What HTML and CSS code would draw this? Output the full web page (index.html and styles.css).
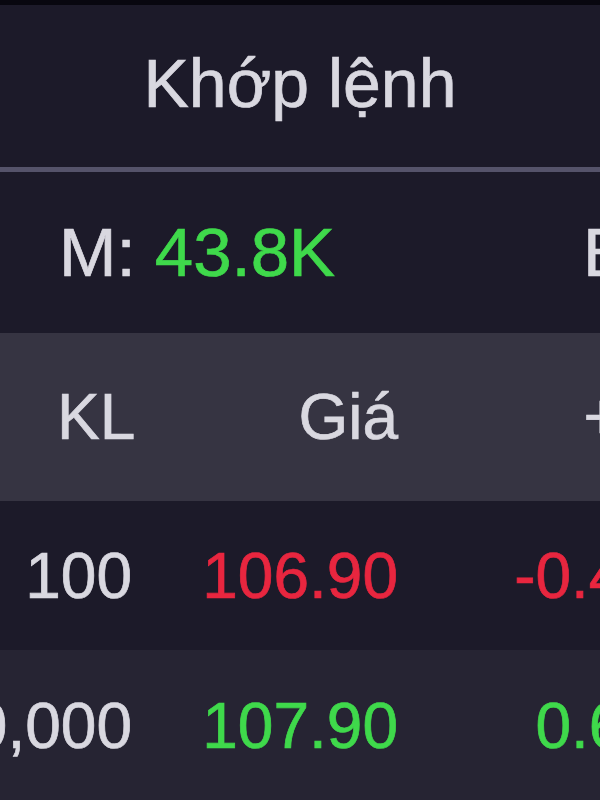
FILE: index.html
```html
<!DOCTYPE html>
<html lang="vi">
<head>
  <meta charset="UTF-8" />
  <meta name="viewport" content="width=device-width, initial-scale=1.0" />
  <title>Khớp lệnh</title>
  <link rel="stylesheet" href="styles.css">
</head>
<body>

<div class="screen">
  <div class="status-strip"></div>

  <!-- Title -->
  <div class="title-bar">Khớp lệnh</div>

  <!-- Summary -->
  <div class="summary">
    <span class="sum-item">M: <span class="up">43.8K</span></span>
    <span class="sum-item">B: <span class="down">21.4K</span></span>
  </div>

  <!-- Table -->
  <div class="table">
    <div class="row head">
      <div class="cell vol">KL</div>
      <div class="cell price">Giá</div>
      <div class="cell change">+/-</div>
    </div>
    <div class="row">
      <div class="cell vol">100</div>
      <div class="cell price down">106.90</div>
      <div class="cell change down">-0.40</div>
    </div>
    <div class="row alt">
      <div class="cell vol">10,000</div>
      <div class="cell price up">107.90</div>
      <div class="cell change up">0.60</div>
    </div>
  </div>
</div>

</body>
</html>
```

FILE: styles.css
```css
* { margin: 0; padding: 0; box-sizing: border-box; }

body {
  font-family: 'Liberation Sans', Arial, sans-serif;
  background: #1c1a29;
  color: #d9d8e0;
  overflow: hidden;
}

.screen {
  width: 600px;
  height: 800px;
  overflow: hidden;
  background: #1c1a29;
  -webkit-text-stroke: 0.7px currentColor;
}

.status-strip {
  height: 5px;
  background: #08070f;
}

.title-bar {
  height: 167px;
  padding-bottom: 7px;
  display: flex;
  justify-content: center;
  align-items: center;
  font-size: 68px;
  line-height: 1;
  border-bottom: 5px solid #55536a;
}

.summary {
  height: 161px;
  display: flex;
  align-items: center;
  padding-left: 59px;
  font-size: 69px;
  white-space: nowrap;
}

.sum-item {
  width: 524px;
  flex-shrink: 0;
}

.up { color: #3fd94b; }
.down { color: #e8263f; }

.table {
  width: 700px;
}

.row {
  display: flex;
  height: 149px;
  align-items: center;
  font-size: 64px;
  white-space: nowrap;
}

.row.head {
  height: 168px;
  background: #363442;
  font-size: 64px;
}

.row.alt {
  background: #262433;
  height: 151px;
}

.cell {
  flex-shrink: 0;
  text-align: right;
}

.cell.vol {
  width: 150px;
  padding-right: 18px;
  direction: rtl;
  overflow: hidden;
}

.head .cell.vol {
  direction: ltr;
  text-align: left;
  padding-left: 57px;
}

.cell.price {
  width: 248px;
}

.cell.change {
  width: 262px;
}
```
